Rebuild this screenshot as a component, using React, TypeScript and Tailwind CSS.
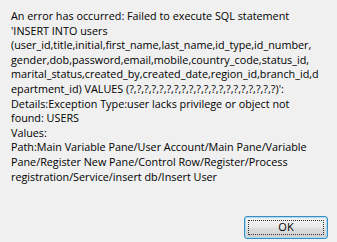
const lines = [
  "An error has occurred: Failed to execute SQL statement",
  "'INSERT INTO users",
  "(user_id,title,initial,first_name,last_name,id_type,id_number,",
  "gender,dob,password,email,mobile,country_code,status_id,",
  "marital_status,created_by,created_date,region_id,branch_id,d",
  "epartment_id) VALUES (?,?,?,?,?,?,?,?,?,?,?,?,?,?,?,?,?,?,?,?)':",
  "Details:Exception Type:user lacks privilege or object not",
  "found: USERS",
  "Values:",
  "Path:Main Variable Pane/User Account/Main Pane/Variable",
  "Pane/Register New Pane/Control Row/Register/Process",
  "registration/Service/insert db/Insert User",
];

export default function App() {
  return (
    <div className="flex h-[242px] w-[337px] flex-col overflow-hidden bg-[#f0f0f0] font-['Open_Sans',sans-serif] text-[10.8px] leading-[14.6px] text-black">
      <div className="pl-[11px] pt-[9px]">
        {lines.map((l, i) => (
          <div key={i} className="whitespace-nowrap">
            {l}
          </div>
        ))}
      </div>
      <div className="mt-auto flex justify-end pb-[3px] pr-[9px]">
        <button
          type="button"
          className="relative h-[23px] w-[84px] rounded-[3px] border border-[#3a8cc4] bg-[linear-gradient(to_bottom,#f2f2f2_0%,#ebebeb_45%,#dddddd_55%,#cfcfcf_100%)] text-[11px] text-black shadow-[inset_0_0_0_1px_#a8dcf2]"
        >
          <span className="absolute inset-[3px] border border-dotted border-[#333]" />
          OK
        </button>
      </div>
    </div>
  );
}
